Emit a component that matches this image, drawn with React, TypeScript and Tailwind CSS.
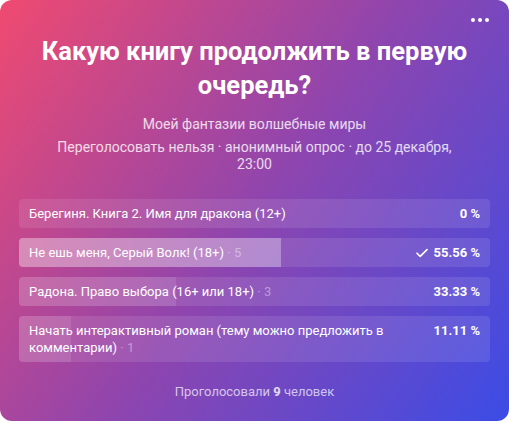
const options = [
	{ title: "Берегиня. Книга 2. Имя для дракона (12+)", votes: 0, percent: 0 },
	{ title: "Не ешь меня, Серый Волк! (18+)", votes: 5, percent: 55.56, mine: true },
	{ title: "Радона. Право выбора (16+ или 18+)", votes: 3, percent: 33.33 },
	{
		title: "Начать интерактивный роман (тему можно предложить в комментарии)",
		votes: 1,
		percent: 11.11,
	},
];

function PollOption({
	title,
	votes,
	percent,
	mine,
}: {
	title: string;
	votes: number;
	percent: number;
	mine?: boolean;
}) {
	return (
		<div className="relative overflow-hidden rounded-[4px] bg-white/10">
			<div
				className={`absolute inset-y-0 left-0 ${mine ? "bg-white/30" : "bg-white/10"}`}
				style={{ width: `${percent}%` }}
			/>
			<div className="relative flex items-start gap-4 px-[10px] py-[6px] text-[13px] leading-[17px]">
				<div className="flex-1 text-white">
					{title}
					{votes > 0 && <span className="text-white/40"> · {votes}</span>}
				</div>
				<div className="flex items-center gap-[6px] font-bold text-white">
					{mine && (
						<svg width="12" height="10" viewBox="0 0 12 10" fill="none">
							<path
								d="M1 5.2 4.2 8.4 11 1.6"
								stroke="white"
								strokeWidth="1.6"
								strokeLinecap="round"
								strokeLinejoin="round"
							/>
						</svg>
					)}
					{percent} %
				</div>
			</div>
		</div>
	);
}

export default function App() {
	return (
		<div className="h-[421px] w-[509px] bg-white font-['Roboto',sans-serif]">
			<div className="relative flex h-full flex-col rounded-[12px] bg-[linear-gradient(125deg,#f04a70_0%,#8f45ae_50%,#3b4ce6_100%)] px-[19px] pt-[34px]">
				<div className="absolute top-[18px] right-[20px] flex gap-[3px]">
					<span className="size-[4px] rounded-full bg-white" />
					<span className="size-[4px] rounded-full bg-white" />
					<span className="size-[4px] rounded-full bg-white" />
				</div>
				<h1 className="px-2 text-center font-bold text-[25.5px] leading-[34px] text-white">
					Какую книгу продолжить в первую очередь?
				</h1>
				<div className="mt-[14px] text-center text-[14px] leading-[17px] text-white/80">
					Моей фантазии волшебные миры
				</div>
				<div className="mx-auto mt-[6px] w-[420px] text-center text-[14px] leading-[17px] text-white/80">
					Переголосовать нельзя · анонимный опрос · до 25 декабря, 23:00
				</div>
				<div className="mt-[26px] flex flex-col gap-[10px]">
					{options.map((o) => (
						<PollOption key={o.title} {...o} />
					))}
				</div>
				<div className="mt-[20px] text-center text-[13px] text-white/70">
					Проголосовали <b className="text-white/80">9</b> человек
				</div>
			</div>
		</div>
	);
}
